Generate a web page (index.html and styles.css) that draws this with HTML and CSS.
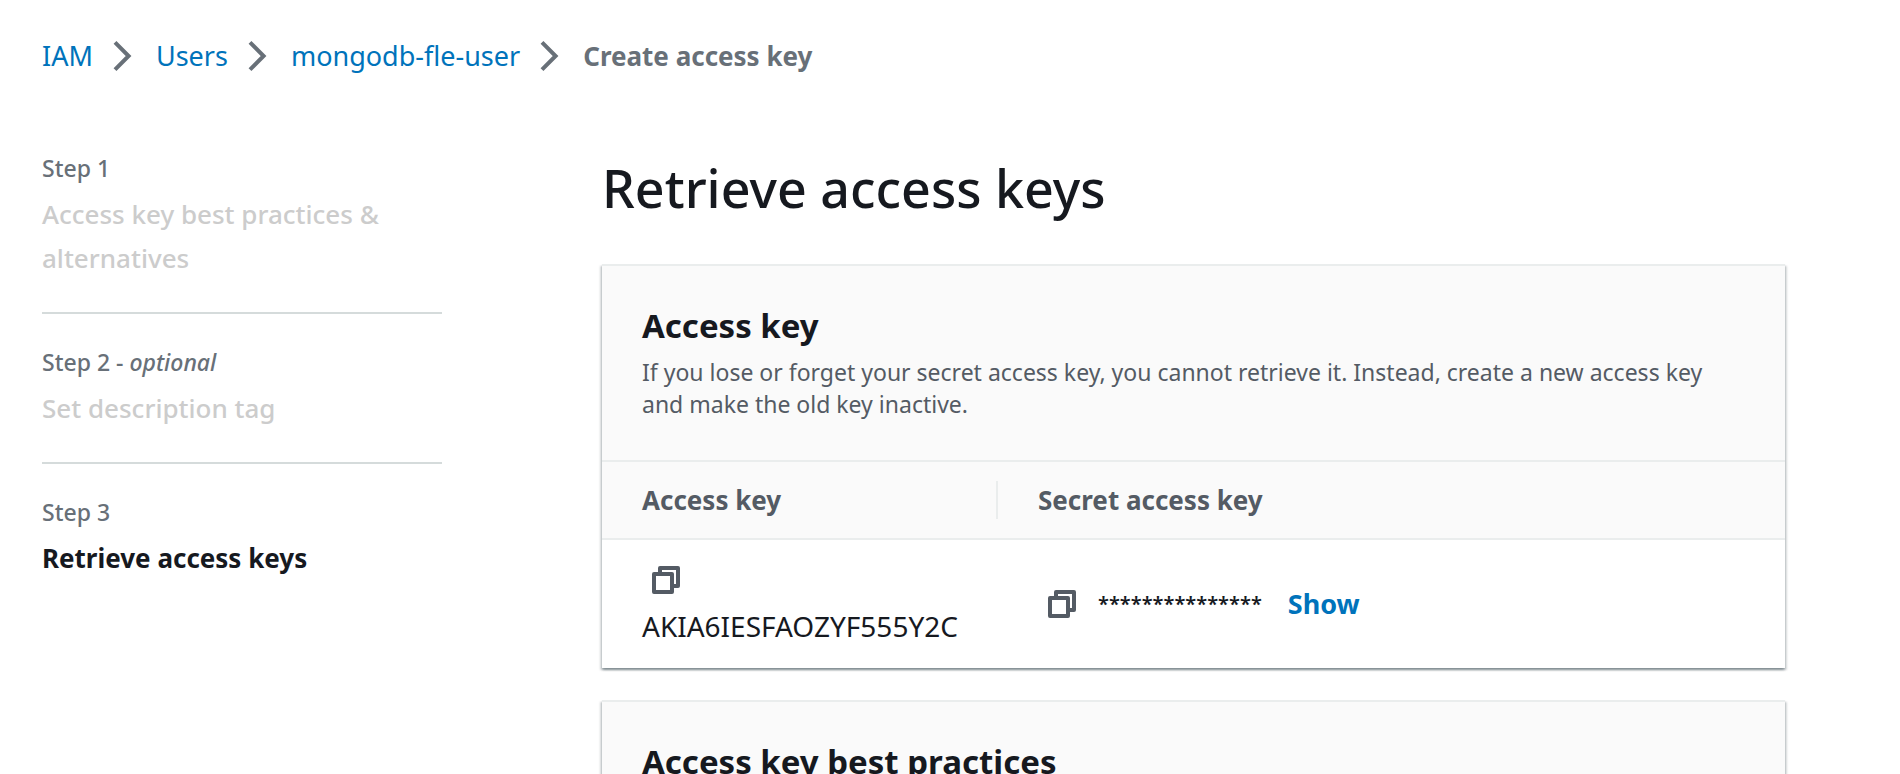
FILE: index.html
```html
<!DOCTYPE html>
<html lang="en">
<head>
  <meta charset="utf-8">
  <meta name="viewport" content="width=device-width, initial-scale=1">
  <title>Create access key</title>
  <link rel="stylesheet" href="styles.css">
</head>
<body>
  <svg class="sprite" aria-hidden="true">
    <symbol id="icon-angle" viewBox="0 0 16 16">
      <path d="M3.5 1.2 10.3 8 3.5 14.8" fill="none" stroke="currentColor" stroke-width="2"/>
    </symbol>
    <symbol id="icon-copy" viewBox="0 0 28 28">
      <path d="M2 8H20V26H2ZM8 6V2H26V20H22" fill="none" stroke="currentColor" stroke-width="4" stroke-linejoin="round"/>
    </symbol>
  </svg>

  <nav aria-label="Breadcrumbs">
    <ol class="breadcrumbs">
      <li class="crumb"><a class="link" href="#">IAM</a><svg class="crumb-icon" aria-hidden="true"><use href="#icon-angle"/></svg></li>
      <li class="crumb"><a class="link" href="#">Users</a><svg class="crumb-icon" aria-hidden="true"><use href="#icon-angle"/></svg></li>
      <li class="crumb"><a class="link" href="#">mongodb-fle-user</a><svg class="crumb-icon" aria-hidden="true"><use href="#icon-angle"/></svg></li>
      <li class="crumb crumb-current" aria-current="page">Create access key</li>
    </ol>
  </nav>

  <div class="wizard">
    <nav aria-label="Steps">
      <ol class="steps">
        <li class="step">
          <div class="step-label">Step 1</div>
          <div class="step-name">Access key best practices &amp; alternatives</div>
        </li>
        <li class="step">
          <div class="step-label">Step 2 - <em>optional</em></div>
          <div class="step-name">Set description tag</div>
        </li>
        <li class="step">
          <div class="step-label">Step 3</div>
          <div class="step-name step-name-active" aria-current="step">Retrieve access keys</div>
        </li>
      </ol>
    </nav>

    <main class="content">
      <h1 class="page-title">Retrieve access keys</h1>

      <section class="card">
        <header class="card-header">
          <h2 class="card-title">Access key</h2>
          <p class="card-description">If you lose or forget your secret access key, you cannot retrieve it. Instead, create a new access key and make the old key inactive.</p>
        </header>
        <table class="key-table">
          <thead>
            <tr>
              <th class="key-column" scope="col"><div class="column-label column-divider">Access key</div></th>
              <th scope="col"><div class="column-label">Secret access key</div></th>
            </tr>
          </thead>
          <tbody>
            <tr>
              <td>
                <button class="copy-button" type="button" aria-label="Copy access key"><svg class="copy-icon" aria-hidden="true"><use href="#icon-copy"/></svg></button>
                <div class="key-value">AKIA6IESFAOZYF555Y2C</div>
              </td>
              <td>
                <div class="secret">
                  <button class="copy-button" type="button" aria-label="Copy secret access key"><svg class="copy-icon" aria-hidden="true"><use href="#icon-copy"/></svg></button>
                  <span class="secret-mask">***************</span>
                  <button class="show-button" type="button">Show</button>
                </div>
              </td>
            </tr>
          </tbody>
        </table>
      </section>

      <section class="card">
        <header class="card-header">
          <h2 class="card-title">Access key best practices</h2>
        </header>
      </section>
    </main>
  </div>
</body>
</html>
```
FILE: styles.css
```css
* {
  box-sizing: border-box;
}

html {
  scrollbar-width: none;
}

body {
  margin: 0;
  padding: 36px 115px 0 42px;
  background: #fff;
  color: #16191f;
  font-family: "Noto Sans", "Open Sans", sans-serif;
  font-size: 27px;
  line-height: 44px;
}

h1,
h2,
p,
ol {
  margin: 0;
  padding: 0;
}

ol {
  list-style: none;
}

button {
  padding: 0;
  border: 0;
  background: none;
  font: inherit;
  cursor: pointer;
}

.sprite {
  display: none;
}

.link {
  color: #0073bb;
  text-decoration: none;
}

.breadcrumbs {
  display: flex;
  flex-wrap: wrap;
  margin-bottom: 76px;
  line-height: 40px;
}

.crumb {
  display: flex;
  align-items: center;
  color: #687078;
}

.crumb-icon {
  width: 32px;
  height: 32px;
  margin: 0 16px 0 15px;
}

.crumb-current {
  font-size: 26px;
  font-weight: 700;
}

.wizard {
  display: grid;
  grid-template-columns: 400px minmax(0, 1fr);
  column-gap: 160px;
}

.step {
  padding-bottom: 32px;
}

.step + .step {
  padding-top: 32px;
  border-top: 2px solid #d5dbdb;
}

.step-label {
  margin-bottom: 8px;
  color: #687078;
  font-size: 23px;
  font-weight: 500;
  line-height: 32px;
}

.step-name {
  color: #ccc;
  font-size: 26px;
  font-weight: 500;
}

.step-name-active {
  color: #16191f;
  font-weight: 700;
}

.content {
  padding-top: 4px;
}

.page-title {
  margin-bottom: 44px;
  font-size: 52px;
  font-weight: 500;
  line-height: 64px;
}

.card {
  margin-bottom: 32px;
  border-top: 2px solid #eaeded;
  background: #fff;
  box-shadow:
    0 2px 2px 0 rgba(0, 28, 36, 0.3),
    2px 2px 2px 0 rgba(0, 28, 36, 0.15),
    -2px 2px 2px 0 rgba(0, 28, 36, 0.15);
}

.card-header {
  padding: 38px 40px 40px;
  background: #fafafa;
}

.card-title {
  font-size: 33px;
  font-weight: 700;
  line-height: 44px;
}

.card-description {
  margin-top: 8px;
  color: #545b64;
  font-size: 23px;
  line-height: 32px;
}

.key-table {
  width: 100%;
  border-spacing: 0;
  table-layout: fixed;
}

.key-table th {
  padding: 19px 0 19px 40px;
  border: solid #eaeded;
  border-width: 2px 0;
  background: #fafafa;
  color: #545b64;
  font-size: 26px;
  font-weight: 700;
  line-height: 38px;
  text-align: left;
}

.key-table .key-column {
  width: 396px;
}

.column-divider {
  border-right: 2px solid #eaeded;
}

.key-table td {
  padding: 18px 0 18px 40px;
  vertical-align: middle;
}

.copy-button {
  display: flex;
  align-items: center;
  justify-content: center;
  width: 48px;
  height: 44px;
  color: #545b64;
}

.copy-icon {
  width: 28px;
  height: 28px;
}

.key-value {
  font-size: 28px;
  line-height: 48px;
}

.secret {
  display: flex;
  align-items: center;
}

.secret-mask {
  margin: 0 26px 0 12px;
  font-size: 20px;
  font-weight: 600;
}

.show-button {
  color: #0073bb;
  font-size: 27px;
  font-weight: 700;
}
```
